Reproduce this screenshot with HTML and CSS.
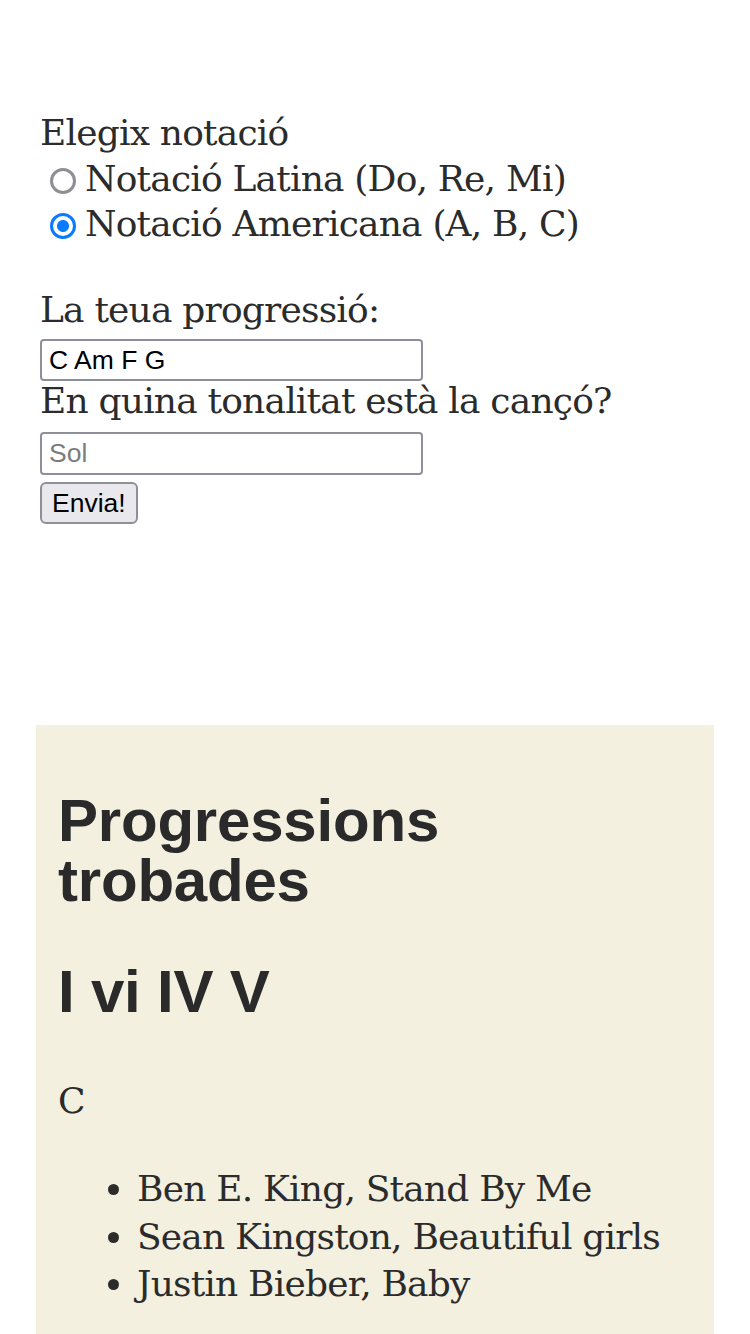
FILE: index.html
```html
<!DOCTYPE html>
<html lang="ca">
<head>
<meta charset="utf-8">
<title>Progressions</title>
<link rel="stylesheet" href="styles.css">
</head>
<body>
<main class="page">
  <form class="form">
    <p class="label">Elegix notació</p>
    <label class="option"><input class="radio" type="radio" name="notacio" value="latina">Notació Latina (Do, Re, Mi)</label>
    <label class="option"><input class="radio" type="radio" name="notacio" value="americana" checked>Notació Americana (A, B, C)</label>
    <label class="field-label first" for="prog">La teua progressió:</label>
    <input class="text" id="prog" type="text" value="C Am F G">
    <label class="field-label" for="ton">En quina tonalitat està la cançó?</label>
    <input class="text second" id="ton" type="text" placeholder="Sol">
    <button class="submit" type="button">Envia!</button>
  </form>

  <section class="results">
    <h2 class="title">Progressions trobades</h2>
    <h2 class="degrees">I vi IV V</h2>
    <p class="key">C</p>
    <ul class="songs">
      <li>Ben E. King, Stand By Me</li>
      <li>Sean Kingston, Beautiful girls</li>
      <li>Justin Bieber, Baby</li>
    </ul>
  </section>
</main>
</body>
</html>
```

FILE: styles.css
```css
html, body {
  margin: 0;
  padding: 0;
  background: #ffffff;
}

body {
  font-family: "DejaVu Serif", "Liberation Serif", serif;
  font-size: 36px;
  letter-spacing: -0.8px;
  color: #2b2b2b;
}

.page {
  display: flex;
  flex-direction: column;
}

.form {
  display: flex;
  flex-direction: column;
  align-items: flex-start;
  padding: 110px 0 0 40px;
}

.label {
  margin: 0;
  line-height: 46px;
}

.option {
  display: flex;
  align-items: center;
  line-height: 45px;
  height: 45px;
}

.radio {
  appearance: none;
  -webkit-appearance: none;
  box-sizing: border-box;
  width: 26px;
  height: 26px;
  margin: 4px 9px 0 10px;
  border: 3px solid #8e8e96;
  border-radius: 50%;
  background: #ffffff;
  flex: none;
}

.radio:checked {
  border: 3.5px solid #0a7aff;
  background: radial-gradient(circle, #0a7aff 0 5.5px, #ffffff 6.5px);
}

.field-label {
  line-height: 40px;
}

.field-label.first {
  margin-top: 44px;
}

.text {
  box-sizing: border-box;
  width: 383px;
  height: 42px;
  margin: 9px 0 0 0;
  padding: 0 7px;
  border: 2px solid #8f8f9b;
  border-radius: 4px;
  font-family: "Liberation Sans", Arial, sans-serif;
  font-size: 26.5px;
  letter-spacing: 0;
  color: #000000;
  background: #ffffff;
  outline: none;
}

.text.second {
  height: 43px;
  margin-top: 11px;
}

.text::placeholder {
  color: #7c7c7c;
}

.submit {
  box-sizing: border-box;
  height: 42px;
  margin-top: 7px;
  padding: 0 10px;
  border: 2px solid #8f8f9b;
  border-radius: 6px;
  background: #e9e9ed;
  font-family: "Liberation Sans", Arial, sans-serif;
  font-size: 26.5px;
  letter-spacing: 0;
  color: #000000;
}

.results {
  margin: 201px 36px 0 36px;
  padding: 66px 22px 40px 22px;
  background: #f3f0df;
}

.title,
.degrees {
  margin: 0;
  font-family: "Liberation Sans", Arial, sans-serif;
  font-weight: 700;
  font-size: 60px;
  line-height: 60px;
  letter-spacing: -0.2px;
  color: #2a2a2a;
}

.degrees {
  margin-top: 51px;
}

.key {
  margin: 56px 0 0 0;
  line-height: 46px;
}

.songs {
  margin: 41px 0 0 0;
  padding-left: 79px;
  line-height: 47.5px;
}
```
